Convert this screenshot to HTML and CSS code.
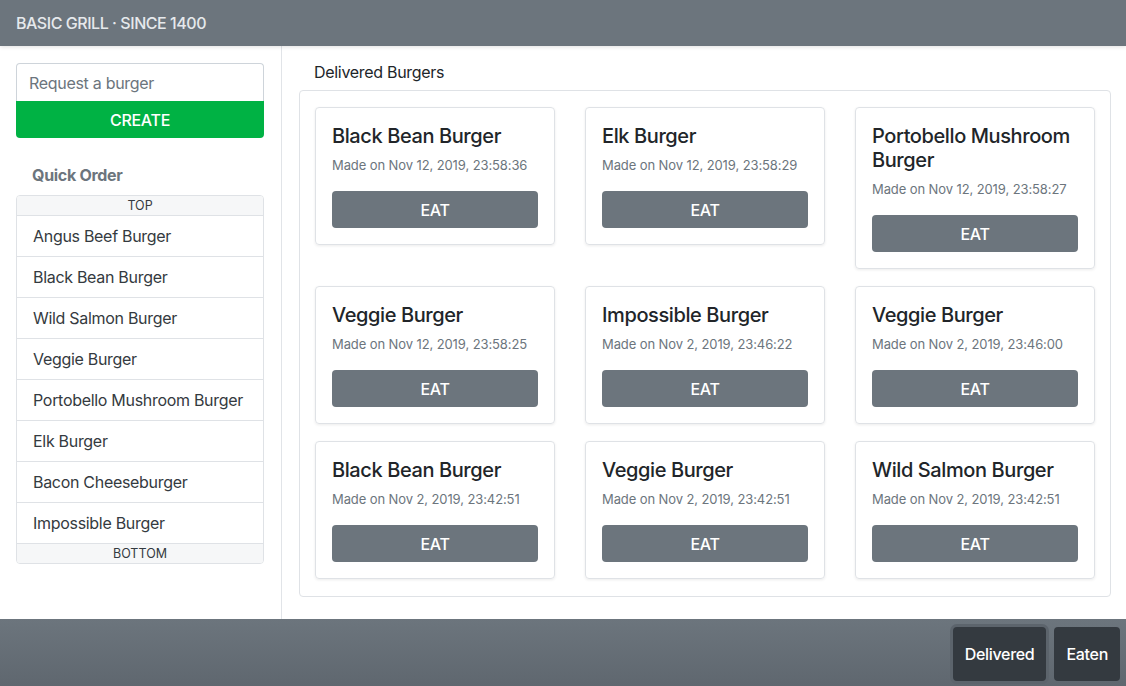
FILE: index.html
```html
<!DOCTYPE html>
<html>
<head>
<meta charset="utf-8">
<link rel="stylesheet" href="styles.css">
</head>
<body>
<div class="app">
  <header class="topbar"><span class="brand">BASIC GRILL · SINCE 1400</span></header>
  <div class="body">
    <aside class="sidebar">
      <div class="order-form">
        <input class="order-input" type="text" placeholder="Request a burger">
        <button class="create-btn">CREATE</button>
      </div>
      <h3 class="quick-title">Quick Order</h3>
      <div class="quick-list">
        <div class="list-cap">TOP</div>
        <div class="list-item">Angus Beef Burger</div>
        <div class="list-item">Black Bean Burger</div>
        <div class="list-item">Wild Salmon Burger</div>
        <div class="list-item">Veggie Burger</div>
        <div class="list-item">Portobello Mushroom Burger</div>
        <div class="list-item">Elk Burger</div>
        <div class="list-item">Bacon Cheeseburger</div>
        <div class="list-item">Impossible Burger</div>
        <div class="list-cap bottom">BOTTOM</div>
      </div>
    </aside>
    <main class="main">
      <h2 class="section-title">Delivered Burgers</h2>
      <div class="board">
        <div class="card"><h4 class="card-title">Black Bean Burger</h4><p class="card-date">Made on Nov 12, 2019, 23:58:36</p><button class="eat-btn">EAT</button></div>
        <div class="card"><h4 class="card-title">Elk Burger</h4><p class="card-date">Made on Nov 12, 2019, 23:58:29</p><button class="eat-btn">EAT</button></div>
        <div class="card"><h4 class="card-title">Portobello Mushroom Burger</h4><p class="card-date">Made on Nov 12, 2019, 23:58:27</p><button class="eat-btn">EAT</button></div>
        <div class="card"><h4 class="card-title">Veggie Burger</h4><p class="card-date">Made on Nov 12, 2019, 23:58:25</p><button class="eat-btn">EAT</button></div>
        <div class="card"><h4 class="card-title">Impossible Burger</h4><p class="card-date">Made on Nov 2, 2019, 23:46:22</p><button class="eat-btn">EAT</button></div>
        <div class="card"><h4 class="card-title">Veggie Burger</h4><p class="card-date">Made on Nov 2, 2019, 23:46:00</p><button class="eat-btn">EAT</button></div>
        <div class="card"><h4 class="card-title">Black Bean Burger</h4><p class="card-date">Made on Nov 2, 2019, 23:42:51</p><button class="eat-btn">EAT</button></div>
        <div class="card"><h4 class="card-title">Veggie Burger</h4><p class="card-date">Made on Nov 2, 2019, 23:42:51</p><button class="eat-btn">EAT</button></div>
        <div class="card"><h4 class="card-title">Wild Salmon Burger</h4><p class="card-date">Made on Nov 2, 2019, 23:42:51</p><button class="eat-btn">EAT</button></div>
      </div>
    </main>
  </div>
  <footer class="footer">
    <button class="tab-btn active">Delivered</button>
    <button class="tab-btn">Eaten</button>
  </footer>
</div>
</body>
</html>
```
FILE: styles.css
```css
* { box-sizing: border-box; }
html, body { margin: 0; padding: 0; }
body {
  font-family: Inter, "Noto Sans", "Liberation Sans", sans-serif;
  color: #212529;
  background: #fff;
  width: 1126px;
  height: 686px;
  overflow: hidden;
  letter-spacing: -0.3px;
}
.app {
  display: flex;
  flex-direction: column;
  height: 686px;
}
.topbar {
  height: 46px;
  flex: 0 0 46px;
  background: #6c757d;
  display: flex;
  align-items: center;
  padding: 0 16px;
  box-shadow: 0 1px 4px rgba(0,0,0,.12);
  position: relative;
  z-index: 1;
}
.brand {
  color: #e6e9ec;
  font-size: 16px;
  font-weight: 500;
  letter-spacing: -0.45px;
}
.body {
  flex: 1 1 auto;
  display: flex;
  min-height: 0;
}
.sidebar {
  width: 282px;
  flex: 0 0 282px;
  border-right: 1px solid #e1e4e8;
  padding: 17px 17px 0 16px;
}
.order-form {
  display: flex;
  flex-direction: column;
}
.order-input {
  height: 38px;
  border: 1px solid #ced4da;
  border-bottom: none;
  border-radius: 4px 4px 0 0;
  padding: 0 12px;
  font-family: inherit;
  font-size: 16px;
  letter-spacing: -0.3px;
  color: #495057;
  outline: none;
}
.order-input::placeholder { color: #6c757d; }
.create-btn {
  height: 37px;
  border: none;
  background: #00b244;
  color: #fff;
  font-family: inherit;
  font-size: 16px;
  font-weight: 500;
  letter-spacing: -0.3px;
  border-radius: 0 0 4px 4px;
}
.quick-title {
  margin: 25px 0 8px 16px;
  font-size: 16px;
  line-height: 24px;
  font-weight: 700;
  color: #6c757d;
}
.quick-list {
  border: 1px solid #dfe2e6;
  border-radius: 4px;
  overflow: hidden;
}
.list-cap {
  height: 20px;
  background: #f6f7f8;
  border-bottom: 1px solid #dfe2e6;
  font-size: 12.5px;
  line-height: 19px;
  text-align: center;
  color: #343a40;
  letter-spacing: 0;
}
.list-cap.bottom {
  border-bottom: none;
  height: 19px;
}
.list-item {
  height: 41px;
  border-bottom: 1px solid #dfe2e6;
  padding: 0 16px;
  display: flex;
  align-items: center;
  font-size: 16px;
  color: #343a40;
}
.main {
  flex: 1 1 auto;
  padding: 14px 16px 0 17px;
}
.section-title {
  margin: 0 0 6px 15px;
  font-size: 16px;
  line-height: 24px;
  font-weight: 400;
  color: #212529;
}
.board {
  border: 1px solid #dfe2e6;
  border-radius: 4px;
  padding: 16px 15px 17px 15px;
  display: grid;
  grid-template-columns: repeat(3, 240px);
  column-gap: 30px;
  row-gap: 17px;
  align-items: start;
}
.card {
  border: 1px solid #dfe2e6;
  border-radius: 4px;
  box-shadow: 0 1px 3px rgba(0,0,0,.08);
  padding: 16px;
  display: flex;
  flex-direction: column;
}
.card-title {
  margin: 0;
  font-size: 20px;
  line-height: 24px;
  font-weight: 500;
  letter-spacing: -0.4px;
  color: #212529;
}
.card-date {
  margin: 8px 0 0;
  font-size: 13px;
  line-height: 19px;
  letter-spacing: -0.1px;
  color: #6c757d;
}
.eat-btn {
  margin-top: 16px;
  height: 37px;
  border: none;
  border-radius: 4px;
  background: #6c757d;
  color: #fff;
  font-family: inherit;
  font-size: 16px;
  font-weight: 500;
  letter-spacing: -0.3px;
}
.footer {
  height: 67px;
  flex: 0 0 67px;
  background: linear-gradient(to bottom, #6c757d, #5f676f);
  display: flex;
  justify-content: flex-end;
  align-items: flex-start;
  gap: 8px;
  padding: 8px 6px 0 0;
}
.tab-btn {
  height: 54px;
  border: none;
  border-radius: 4px;
  background: #343a40;
  color: #fff;
  font-family: inherit;
  font-size: 16px;
  font-weight: 500;
  letter-spacing: -0.3px;
  padding: 0 12px;
}
.tab-btn.active {
  box-shadow: 0 0 0 3px #5c646c;
}
```
